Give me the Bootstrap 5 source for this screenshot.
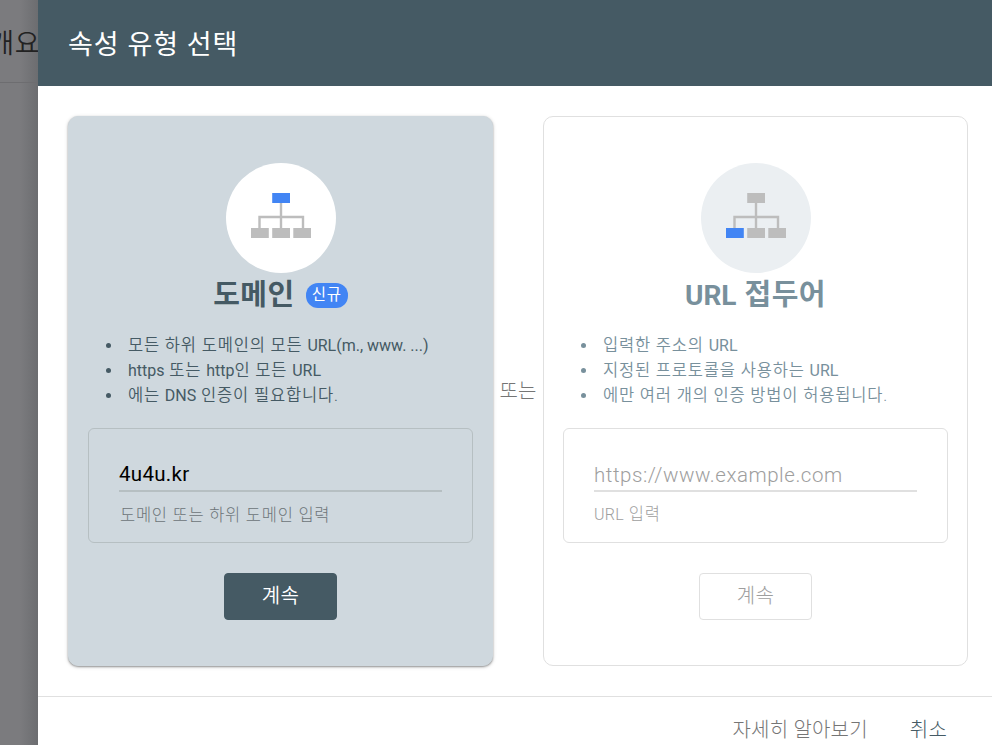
<!DOCTYPE html>
<html lang="ko">
<head>
<meta charset="utf-8">
<meta name="viewport" content="width=device-width, initial-scale=1">
<title>속성 유형 선택</title>
<link href="https://cdn.jsdelivr.net/npm/bootstrap@5.3.0/dist/css/bootstrap.min.css" rel="stylesheet">
<style>
:root{--slate:#455a64;--slate-soft:#78909c;--line:#e0e0e0}
body{font-family:Roboto,"Noto Sans CJK KR",sans-serif;font-size:16.5px;font-weight:300;letter-spacing:.75px}
.page{height:745px}
.backdrop-strip{width:38px;background:linear-gradient(90deg,#7b7b7e 0,#7b7b7e 20px,#6c6d70 100%)}
.strip-head{height:83px;border-bottom:1px solid #6d6d70;font-size:27px;font-weight:350;color:#222;line-height:89px;letter-spacing:.5px;margin-right:-2px}
.sheet-head{height:86px;background:var(--slate);font-size:27px;font-weight:400;letter-spacing:1px;padding-left:30px;padding-top:5px}
.sheet-body{padding:30px 24px 30px 30px;height:610px}
.option{width:425px;height:550px;border-radius:10px;border:1px solid var(--line);padding:46px 19px 0;color:var(--slate-soft)}
.option.chosen{background:#cfd8de;border-color:#cfd8de;color:var(--slate);box-shadow:0 1px 2px rgba(0,0,0,.35),0 1px 4px rgba(0,0,0,.15)}
.disc{width:110px;height:110px;background:#ebeff2;padding-bottom:5px}
.chosen .disc{background:#fff}
.option-title{height:44px;font-size:29px;font-weight:700;letter-spacing:.5px;padding-top:1px}
.new-tag{background:#4285f4;font-size:15.500px;font-weight:400;line-height:24px;height:25px;padding:0 6px;border-radius:12px;letter-spacing:.8px;margin-left:3px}
.facts{margin:16px 0 20px;padding-left:35px;font-weight:350}
.facts li{height:25px;line-height:25px;padding-left:5px;letter-spacing:.82px}
.facts li::marker{font-size:16.5px}
.facts .lt{letter-spacing:0;font-size:16px;font-weight:400}
.big-lt{letter-spacing:0;font-size:28px}
.entry{height:115px;border:1px solid var(--line);border-radius:6px;padding:30px 30px 0;color:#9e9e9e}
.chosen .entry{border-color:#b6bfc2;color:#6c7478}
.entry input{height:33px;padding:0;border:0;border-bottom:2px solid var(--line);border-radius:0;background:transparent;font-size:20.500px;font-weight:300;letter-spacing:.55px}
.entry input:focus{box-shadow:none;background:transparent}
.entry input::placeholder{color:#9e9e9e}
.chosen .entry input{border-color:#b6bfc2;color:#000;font-weight:400;letter-spacing:.3px;padding:0 0 2px}
.hint{line-height:24px;margin-top:11px;padding-left:1px}
.chosen .hint{padding-top:1px}
.hint .lt{font-size:16px;font-weight:300;letter-spacing:.3px;margin-left:-1px}
.go{width:113px;height:47px;margin-top:30px;font-size:20px;letter-spacing:.4px;border-radius:4px;border:1px solid var(--line);background:#fff;color:#9e9e9e;padding:0 0 2px;font-weight:300}
.chosen .go{background:var(--slate);border-color:var(--slate);color:#fff;font-weight:350}
.between{width:50px;font-size:20px;color:#757575;letter-spacing:.2px;padding-bottom:1px}
.sheet-foot{height:49px;border-top:1px solid var(--line);padding:17px 45px 0 0;font-size:20px;letter-spacing:.2px;line-height:32px;gap:42px;color:#757575}
.cancel{color:var(--slate)}
</style>
<script src="https://cdn.jsdelivr.net/npm/bootstrap@5.3.0/dist/js/bootstrap.bundle.min.js"></script>
</head>
<body class="bg-white overflow-hidden">
<div class="page d-flex">
  <aside class="backdrop-strip flex-shrink-0 overflow-hidden">
    <div class="strip-head d-flex justify-content-end text-nowrap">개요</div>
  </aside>
  <main class="flex-grow-1 bg-white">
    <header class="sheet-head d-flex align-items-center text-white">속성 유형 선택</header>
    <div class="sheet-body d-flex">
      <section class="option chosen d-flex flex-column">
        <div class="disc rounded-circle mx-auto flex-shrink-0 d-flex align-items-center justify-content-center">
          <svg width="60" height="45" viewBox="0 0 60 45"><path d="M30 10v26M8.500 35V24h43.500V35" fill="none" stroke="#bdbdbd" stroke-width="2.400"/><path d="M0 35h17.800v10H0zM21.200 35h17.800v10H21.200zM42.300 35H60v10H42.300z" fill="#bdbdbd"/><path d="M21.200 0h17.800v10H21.200z" fill="#4285f4"/></svg>
        </div>
        <div class="option-title d-flex align-items-center justify-content-center gap-2">도메인 <span class="new-tag text-white">신규</span></div>
        <ul class="facts text-nowrap">
          <li>모든 하위 도메인의 모든 <span class="lt">URL(m., www. ...)</span></li>
          <li><span class="lt">https</span> 또는 <span class="lt">http</span>인 모든 <span class="lt">URL</span></li>
          <li>에는 <span class="lt">DNS</span> 인증이 필요합니다.</li>
        </ul>
        <div class="entry">
          <input class="form-control" type="text" value="4u4u.kr" aria-label="도메인">
          <div class="hint">도메인 또는 하위 도메인 입력</div>
        </div>
        <button class="go btn mx-auto" type="button">계속</button>
      </section>
      <div class="between d-flex align-items-center justify-content-center flex-shrink-0 text-nowrap">또는</div>
      <section class="option d-flex flex-column">
        <div class="disc rounded-circle mx-auto flex-shrink-0 d-flex align-items-center justify-content-center">
          <svg width="60" height="45" viewBox="0 0 60 45"><path d="M30 10v26M8.500 35V24h43.500V35" fill="none" stroke="#bdbdbd" stroke-width="2.400"/><path d="M21.200 0h17.800v10H21.200zM21.200 35h17.800v10H21.200zM42.300 35H60v10H42.300z" fill="#bdbdbd"/><path d="M0 35h17.800v10H0z" fill="#4285f4"/></svg>
        </div>
        <div class="option-title d-flex align-items-center justify-content-center gap-2"><span class="big-lt">URL</span>접두어</div>
        <ul class="facts text-nowrap">
          <li>입력한 주소의 <span class="lt">URL</span></li>
          <li>지정된 프로토콜을 사용하는 <span class="lt">URL</span></li>
          <li>에만 여러 개의 인증 방법이 허용됩니다.</li>
        </ul>
        <div class="entry">
          <input class="form-control" type="text" placeholder="https://www.example.com" aria-label="URL">
          <div class="hint"><span class="lt">URL</span> 입력</div>
        </div>
        <button class="go btn mx-auto" type="button">계속</button>
      </section>
    </div>
    <footer class="sheet-foot d-flex justify-content-end"><span>자세히 알아보기</span><span class="cancel">취소</span></footer>
  </main>
</div>
</body>
</html>
